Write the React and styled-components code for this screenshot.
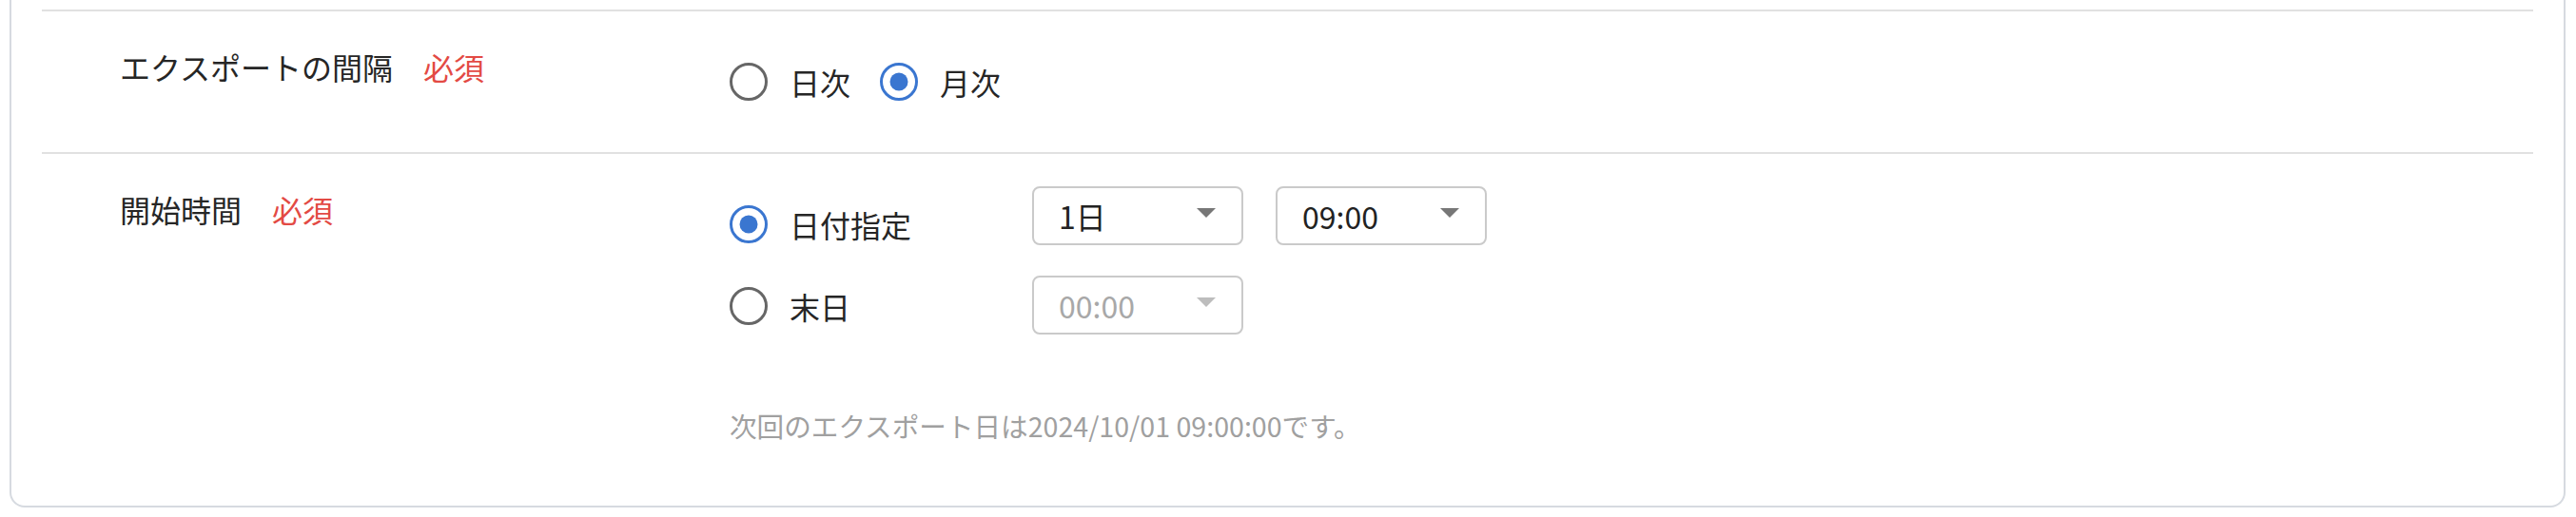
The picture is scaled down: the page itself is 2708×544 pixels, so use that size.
import styled, { createGlobalStyle } from "styled-components";

const GlobalStyle = createGlobalStyle`
  body {
    margin: 0;
    background: #ffffff;
    font-family: "Noto Sans CJK JP", "Noto Sans", sans-serif;
    color: #262626;
  }
`;

const Page = styled.div`
  padding: 0 11px 9px 10px;
`;

const Card = styled.div`
  border: 2px solid #d6dae0;
  border-top: none;
  border-radius: 0 0 16px 16px;
  padding: 10px 32px 0;
  background: #fff;
`;

const Row = styled.div`
  display: flex;
  align-items: flex-start;
  border-top: 2px solid #e1e1e1;
  padding: ${(p) => p.$padding};
`;

const LabelCol = styled.div`
  width: 641px;
  padding-left: 82px;
  flex-shrink: 0;
  font-size: 32px;
  line-height: 48px;
  display: flex;
`;

const Required = styled.span`
  color: #e34a44;
  margin-left: 32px;
`;

const FieldCol = styled.div`
  flex: 1;
  display: flex;
  flex-direction: column;
`;

const RadioGroup = styled.div`
  display: flex;
  gap: 31px;
  margin-top: 16px;
`;

const RadioOption = styled.label`
  display: flex;
  align-items: center;
  gap: 23px;
  height: 48px;
  font-size: 32px;
  color: #262626;
  margin-top: ${(p) => p.$offset || 0}px;
  cursor: pointer;
`;

const RadioCircle = styled.span`
  position: relative;
  width: 40px;
  height: 40px;
  box-sizing: border-box;
  border-radius: 50%;
  border: 3px solid ${(p) => (p.$checked ? "#3a76d0" : "#666666")};
  flex-shrink: 0;
  &::after {
    content: "";
    display: ${(p) => (p.$checked ? "block" : "none")};
    position: absolute;
    left: 50%;
    top: 50%;
    width: 19px;
    height: 19px;
    border-radius: 50%;
    background: #3a76d0;
    transform: translate(-50%, -50%);
  }
`;

const OptionLine = styled.div`
  display: flex;
  align-items: flex-start;
  margin-top: ${(p) => p.$top || 0}px;
`;

const OptionCell = styled.div`
  width: 318px;
  flex-shrink: 0;
`;

const Selects = styled.div`
  display: flex;
  gap: 34px;
`;

const SelectBox = styled.div`
  width: 222px;
  height: 62px;
  box-sizing: border-box;
  border: 2px solid #cacaca;
  border-radius: 8px;
  background: #fff;
  display: flex;
  align-items: center;
  justify-content: space-between;
  padding: 0 27px 0 26px;
  font-size: 32px;
  color: ${(p) => (p.$disabled ? "#a8a8a8" : "#222222")};
`;

const Caret = styled.span`
  width: 0;
  height: 0;
  border-left: 10px solid transparent;
  border-right: 10px solid transparent;
  border-top: 10px solid ${(p) => (p.$disabled ? "#bdbdbd" : "#777777")};
  margin-top: -6px;
`;

const Note = styled.p`
  margin: 75px 0 0;
  font-size: 28.6px;
  line-height: 42px;
  color: #a0a0a0;
`;

const Radio = ({ checked, children, offset }) => (
  <RadioOption $offset={offset}>
    <RadioCircle $checked={checked} />
    <span>{children}</span>
  </RadioOption>
);

const Select = ({ value, disabled }) => (
  <SelectBox $disabled={disabled}>
    <span>{value}</span>
    <Caret $disabled={disabled} />
  </SelectBox>
);

export default function App() {
  return (
    <>
      <GlobalStyle />
      <Page>
        <Card>
          <Row $padding="34px 0 50px">
            <LabelCol>
              エクスポートの間隔<Required>必須</Required>
            </LabelCol>
            <FieldCol>
              <RadioGroup>
                <Radio>日次</Radio>
                <Radio checked>月次</Radio>
              </RadioGroup>
            </FieldCol>
          </Row>
          <Row $padding="34px 0 63px">
            <LabelCol>
              開始時間<Required>必須</Required>
            </LabelCol>
            <FieldCol>
              <OptionLine>
                <OptionCell>
                  <Radio checked offset={16}>
                    日付指定
                  </Radio>
                </OptionCell>
                <Selects>
                  <Select value="1日" />
                  <Select value="09:00" />
                </Selects>
              </OptionLine>
              <OptionLine $top={30}>
                <OptionCell>
                  <Radio offset={8}>末日</Radio>
                </OptionCell>
                <Selects>
                  <Select value="00:00" disabled />
                </Selects>
              </OptionLine>
              <Note>次回のエクスポート日は2024/10/01 09:00:00です。</Note>
            </FieldCol>
          </Row>
        </Card>
      </Page>
    </>
  );
}
